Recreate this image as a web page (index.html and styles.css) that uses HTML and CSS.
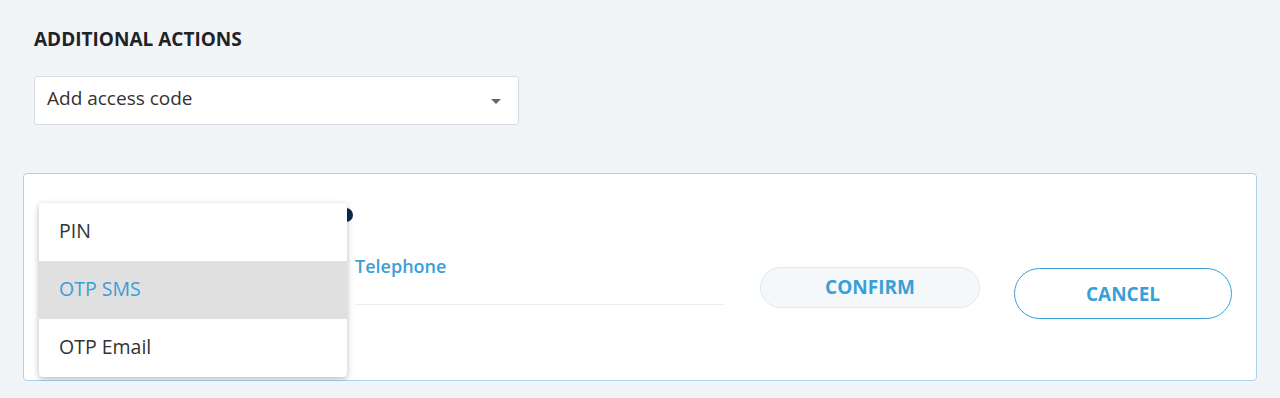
FILE: index.html
```html
<!DOCTYPE html>
<html lang="en">
<head>
    <meta charset="UTF-8">
    <meta name="viewport" content="width=device-width, initial-scale=1.0">
    <title>Additional Actions</title>
    <link rel="stylesheet" href="styles.css">
</head>
<body>
    <div class="page">
        <h2 class="section-title">ADDITIONAL ACTIONS</h2>

        <!-- Action select -->
        <div class="select">
            <span class="select-value">Add access code</span>
            <span class="select-arrow"></span>
        </div>

        <!-- Access code panel -->
        <div class="panel">
            <div class="field field-type">
                <div class="field-label"><span class="info-icon"></span></div>

                <!-- Open dropdown menu -->
                <ul class="menu">
                    <li class="menu-item">PIN</li>
                    <li class="menu-item active">OTP SMS</li>
                    <li class="menu-item">OTP Email</li>
                </ul>
            </div>

            <div class="field field-phone">
                <div class="field-label">Telephone</div>
                <div class="field-input"></div>
            </div>

            <div class="actions">
                <button class="btn btn-confirm">CONFIRM</button>
                <button class="btn btn-cancel">CANCEL</button>
            </div>
        </div>
    </div>
</body>
</html>
```

FILE: styles.css
```css
body {
    margin: 0;
    background-color: #f2f5f8;
    font-family: "Open Sans", "Noto Sans", sans-serif;
    color: #333;
}

.page {
    padding: 27px 23px 0 23px;
}

.section-title {
    margin: 0 0 0 11px;
    font-size: 19px;
    line-height: 24px;
    font-weight: 700;
    color: #1f2328;
}

.select {
    display: flex;
    align-items: center;
    justify-content: space-between;
    box-sizing: border-box;
    width: 485px;
    height: 49px;
    margin: 25px 0 0 11px;
    padding: 0 17px 0 12px;
    background-color: #fff;
    border: 1px solid #d6dbe1;
    border-radius: 3px;
}

.select-value {
    font-size: 19px;
    color: #333;
    margin-top: -5px;
}

.select-arrow {
    width: 0;
    height: 0;
    border-left: 5px solid transparent;
    border-right: 5px solid transparent;
    border-top: 5px solid #666;
    margin-top: 2px;
}

.panel {
    display: flex;
    align-items: flex-start;
    box-sizing: border-box;
    height: 208px;
    margin-top: 48px;
    padding: 30px 18px 0 15px;
    background-color: #fff;
    border: 1px solid #a8d4ee;
    border-radius: 4px;
}

.field {
    position: relative;
    flex-shrink: 0;
}

.field-type {
    width: 316px;
}

.field-type .field-label {
    display: flex;
    justify-content: flex-end;
    padding: 4px 2px 0 0;
}

.field-label {
    font-size: 18px;
    font-weight: 600;
    color: #3a9fd8;
}

.info-icon {
    display: block;
    width: 14px;
    height: 14px;
    border-radius: 50%;
    background-color: #0d2a4d;
}

.field-phone {
    width: 369px;
    margin-top: 50px;
}

.field-input {
    height: 26px;
    border-bottom: 1px solid #ececec;
}

.menu {
    position: absolute;
    top: -1px;
    left: 0;
    width: 308px;
    margin: 0;
    padding: 0;
    list-style: none;
    background-color: #fff;
    border-radius: 4px;
    box-shadow: 0 2px 6px rgba(0, 0, 0, 0.28);
    overflow: hidden;
}

.menu-item {
    height: 58px;
    padding-left: 20px;
    line-height: 56px;
    font-size: 19.5px;
    color: #333;
}

.menu-item.active {
    background-color: #e0e0e0;
    color: #3a9fd8;
}

.actions {
    display: flex;
    flex-shrink: 0;
    align-items: flex-start;
    margin-left: 36px;
    margin-top: 63px;
}

.btn {
    box-sizing: border-box;
    font-family: "Open Sans", "Noto Sans", sans-serif;
    font-size: 19px;
    font-weight: 700;
    color: #3a9fd8;
    cursor: pointer;
}

.btn-confirm {
    width: 220px;
    height: 41px;
    padding-bottom: 2px;
    background-color: #f5f8fb;
    border: 1px solid #dce9f3;
    border-radius: 21px;
}

.btn-cancel {
    width: 218px;
    height: 51px;
    margin-left: 34px;
    margin-top: 1px;
    background-color: #fff;
    border: 1px solid #3a9fd8;
    border-radius: 26px;
}
```
